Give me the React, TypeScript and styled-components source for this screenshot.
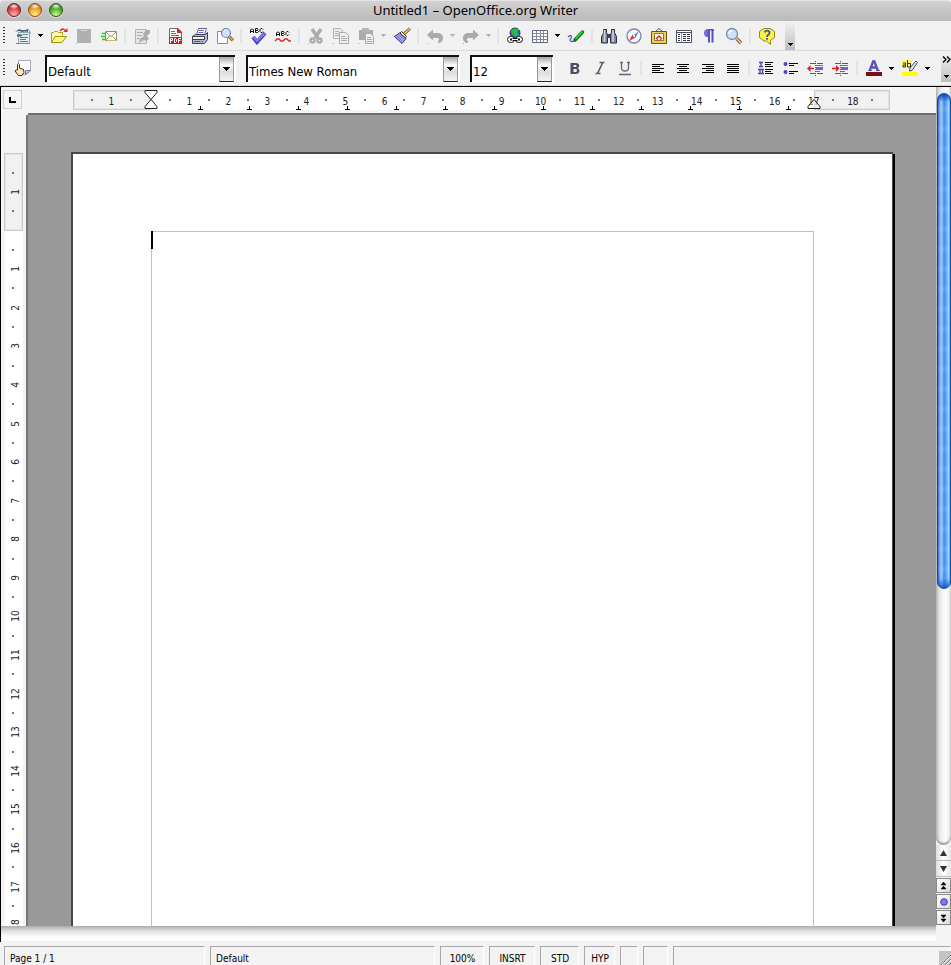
import React from "react";
import styled, { createGlobalStyle, css } from "styled-components";

const Global = createGlobalStyle`
  * { box-sizing: border-box; }
  html, body { margin: 0; height: 100%; }
  body { overflow: hidden; background: #f1f1f1; }
  button, select, textarea { font: inherit; color: inherit; margin: 0; padding: 0; border: 0; border-radius: 0; background: none; }
  svg { display: block; }
`;

const Window = styled.div`
  height: 100vh;
  display: flex;
  flex-direction: column;
  background: #f1f1f1;
  color: #000;
  font-family: "DejaVu Sans Condensed", "DejaVu Sans", sans-serif;
  font-size: 13px;
`;

/* ---------- title bar ---------- */

const TitleBar = styled.header`
  flex: 0 0 21px;
  display: grid;
  grid-template-columns: 1fr auto 1fr;
  align-items: center;
  padding: 0 7px;
  background: linear-gradient(#d2d2d2, #b9b9b9);
  border-top: 1px solid #e4e4e4;
  border-radius: 4px 4px 0 0;
`;

const Lights = styled.div`
  display: flex;
  gap: 7px;
  margin-top: -2px;
`;

const Light = styled.button<{ $dark: string; $mid: string; $glow: string }>`
  width: 14px;
  height: 14px;
  border-radius: 50%;
  border: 1px solid ${(p) => p.$dark};
  background:
    radial-gradient(ellipse 5px 3px at 50% 18%, #fffffff0, #ffffff00),
    radial-gradient(circle at 50% 90%, ${(p) => p.$glow} 0, ${(p) => p.$mid} 55%, ${(p) => p.$dark} 100%);
  box-shadow: 0 1px 0 #ffffff80;
`;

const Title = styled.h1`
  margin: 0;
  font: 400 13px/16px "Noto Sans", "Open Sans", sans-serif;
  padding-bottom: 3px;
  white-space: nowrap;
`;

/* ---------- toolbars ---------- */

const Bar = styled.div<{ $tall?: boolean }>`
  flex: 0 0 ${(p) => (p.$tall ? 35 : 30)}px;
  display: flex;
  align-items: center;
  background: #f1f1f1;
  border-bottom: 1px solid #d9d9d9;
  overflow: hidden;
`;

const Grip = styled.span`
  flex: 0 0 2px;
  height: 18px;
  margin: 0 5px 0 3px;
  background: repeating-linear-gradient(#333 0 1px, transparent 1px 3px);
`;

const Tool = styled.button`
  flex: 0 0 25px;
  height: 24px;
  display: flex;
  align-items: center;
  justify-content: center;
  svg { width: 18px; height: 18px; }
`;

const Drop = styled.button<{ $dim?: boolean }>`
  flex: 0 0 11px;
  height: 24px;
  display: flex;
  justify-content: center;
  align-items: center;
  color: ${(p) => (p.$dim ? "#b4b4b4" : "#000")};
`;

const Divider = styled.span`
  flex: 0 0 2px;
  height: 14px;
  margin: 0 3px;
  background: #e2e2e2;
`;

const EndCap = styled.button<{ $last?: boolean }>`
  flex: 0 0 10px;
  height: 28px;
  margin-left: ${(p) => (p.$last ? "auto" : "6px")};
  display: flex;
  flex-direction: column;
  align-items: center;
  justify-content: ${(p) => (p.$last ? "space-between" : "flex-end")};
  padding: 2px 0 4px;
  background: linear-gradient(#f1f1f1, #bdbdbd);
`;

const Pickers = styled.div`
  display: flex;
  gap: 11px;
  margin: 0 9px 0 10px;
`;

const Combo = styled.label<{ $w: number }>`
  flex: 0 1 ${(p) => p.$w}px;
  width: ${(p) => p.$w}px;
  height: 27px;
  display: flex;
  background: #fff;
  border: solid;
  border-width: 2px 0 0 2px;
  border-color: #111 #fff #fff #111;
  box-shadow: 1px 1px 0 #fff;
  position: relative;
`;

const Choice = styled.select`
  flex: 1;
  min-width: 0;
  appearance: none;
  padding: 5px 16px 0 1px;
  font-size: 13px;
  outline: none;
`;

const ComboArrow = styled.span`
  position: absolute;
  right: 1px;
  top: 0;
  width: 15px;
  height: 25px;
  display: flex;
  align-items: center;
  justify-content: center;
  background: linear-gradient(#a8a8a8, #fff 35%, #dcdcdc 60%, #f4f4f4);
  border: solid #999;
  border-width: 0 1px 1px;
  border-bottom-color: #222;
  pointer-events: none;
`;

const Tri: React.FC = () => (
  <svg width="5" height="3" viewBox="0 0 5 3" shapeRendering="crispEdges">
    <path d="M0 0h5v1H0zM1 1h3v1H1zM2 2h1v1H2z" fill="currentColor" />
  </svg>
);

const BigTri: React.FC = () => (
  <svg width="7" height="4" viewBox="0 0 7 4" shapeRendering="crispEdges">
    <path d="M0 0h7v1H0zM1 1h5v1H1zM2 2h3v1H2zM3 3h1v1H3z" fill="#000" />
  </svg>
);

/* ---------- icons ---------- */

const ICONS: Record<string, React.ReactNode> = {
  New: (
    <>
      <path d="M4.500 5.500h11v11h-11z" fill="#e6eff3" stroke="#8fa6b1" />
      <path d="M1 5l4-3 3 1h6v2l-3-.500L8 5 5 4z" fill="#4b6b7b" />
      <path d="M12 2.500h2.500L16 5v2" stroke="#7f98a5" fill="none" />
      <path d="M3 7.500h6l-2 2H3z" fill="#3f6274" />
      <path d="M9 7.500h5" stroke="#6c8a99" />
      <path d="M6 10.500h8M6 12.500h6M6 14.500h8" stroke="#58798a" />
      <path d="M2 16.500h14" stroke="#6f8b98" />
    </>
  ),
  Open: (
    <>
      <path d="M1.500 15.500v-10h2l1-1h3l1 1h4v3" fill="#fffbb0" stroke="#b39a1c" />
      <path d="M1.500 15.500l3.500-6h11.500l-4.500 6z" fill="#fdf77c" stroke="#a58e14" />
      <path d="M10 4c2-3 5-2.500 6 1" stroke="#e02424" fill="none" strokeWidth="1.300" />
      <path d="M13.500 5h4V1z" fill="#e02424" />
    </>
  ),
  Save: (
    <>
      <path d="M2 2h14v14H2z" fill="#b0b0b0" />
      <path d="M6 3h6v1H6z" fill="#d8d8d8" />
      <path d="M1 16h1v1H1z" fill="#d9a27a" />
    </>
  ),
  Mail: (
    <>
      <path d="M5.500 4.500h11v9h-11z" fill="#fffef0" stroke="#8d8d78" />
      <path d="M6 5l5 4.500L16 5M6 13l3.500-4M16 13l-3.500-4" stroke="#8d8d78" fill="none" />
      <path d="M2 6.500h4M1 9.500h5M2 12.500h4" stroke="#20d020" strokeWidth="1.500" />
      <path d="M7 13.500h9" stroke="#c9c34c" />
    </>
  ),
  Edit: (
    <>
      <path d="M2.500 2.500h11v14h-11z" fill="#e6e6e6" stroke="#b2b2b2" />
      <path d="M4 5.500h6M4 8.500h5M4 11.500h3" stroke="#adadad" />
      <path d="M13 3h4v3l-3 3 2 3-3 2-2-1-5 3 1-4 4-3-1-2z" fill="#adadad" />
    </>
  ),
  PDF: (
    <>
      <path d="M3.500 1.500h8l4 4v11h-12z" fill="#fff" stroke="#6d7186" />
      <path d="M11 1h1l4 4v1h-5z" fill="#d92222" />
      <path d="M5 4.500h4M5 6.500h5M5 8.500h8" stroke="#5c5fd0" />
      <path d="M3 10h13v7H3z" fill="#e61313" />
      <path d="M4.500 16v-4.500h2v2h-2M8.500 16v-4.500h1l1 1v2l-1 1h-1M12.500 16v-4.500h2.500M12.500 13.500h2" stroke="#fff" fill="none" />
    </>
  ),
  Print: (
    <>
      <path d="M5.500 8l2-6.500h8L13.500 8z" fill="#fff" stroke="#62667a" />
      <path d="M8 3.500h5M7.500 5.500h5" stroke="#6663d9" />
      <path d="M1.500 9.500l3-2h10l2-2v7l-3 4h-12z" fill="#b9bbcb" stroke="#3c3e50" />
      <path d="M1.500 9.500h12v3h-12z" fill="#f3f3fa" stroke="#3c3e50" />
      <path d="M3 14.500h9" stroke="#565970" />
      <path d="M9 14h2v1H9z" fill="#2bdc2b" />
    </>
  ),
  Preview: (
    <>
      <path d="M1.500 4.500h10v12h-10z" fill="#fff" stroke="#85889c" />
      <circle cx="10" cy="6" r="4.500" fill="#cfe2ff" stroke="#7384bb" strokeWidth="1.200" />
      <path d="M8 5c0-1 1-2 2-2" stroke="#fff" fill="none" />
      <path d="M13 9.500l4 4" stroke="#5d4519" strokeWidth="3" />
      <path d="M13 9.500l4 4" stroke="#eeb957" strokeWidth="1.500" />
    </>
  ),
  Spell: (
    <>
      <path d="M1.500 6V3l1-1h1l1 1v3M1.500 4.500h3M6.500 1.500v4h2l1-1-1-1h-2M6.500 1.500h2l.500 1-.500 1M14 2.500l-1-1h-1l-1 1v2l1 1h1l1-1" stroke="#111" fill="none" />
      <path d="M4 10l4 5 8-9" stroke="#4340a8" strokeWidth="4" fill="none" />
      <path d="M4.500 10L8 14l7.500-7.500" stroke="#827cf5" strokeWidth="2" fill="none" />
    </>
  ),
  AutoSpell: (
    <>
      <path d="M2.500 9V6l1-1h1l1 1v3M2.500 7.500h3M7.500 4.500v4h2l1-1-1-1h-2M7.500 4.500h2l.500 1-.500 1M15 5.500l-1-1h-1l-1 1v2l1 1h1l1-1" stroke="#111" fill="none" />
      <path d="M1 14l2-2h2l2 2h2l2-2h2l2 2h2" stroke="#e62222" fill="none" strokeWidth="1.300" />
    </>
  ),
  Cut: (
    <>
      <path d="M5 2l6 9M14 2L8 11" stroke="#ababab" strokeWidth="3.500" />
      <circle cx="5.500" cy="13.500" r="2" fill="none" stroke="#ababab" strokeWidth="2.300" />
      <circle cx="12.500" cy="13.500" r="2" fill="none" stroke="#ababab" strokeWidth="2.300" />
      <path d="M1 16h1v1H1z" fill="#e0a070" />
    </>
  ),
  Copy: (
    <>
      <path d="M1.500 1.500h7l2 2v8h-9z" fill="#ececec" stroke="#b3b3b3" />
      <path d="M3 4.500h4M3 6.500h5M3 8.500h5" stroke="#b3b3b3" />
      <path d="M7.500 5.500h6l3 3v8h-9z" fill="#f0f0f0" stroke="#a9a9a9" />
      <path d="M9 9.500h4M9 11.500h6M9 13.500h6" stroke="#a9a9a9" />
      <path d="M1 16l1 1" stroke="#6fc56f" />
    </>
  ),
  Paste: (
    <>
      <path d="M2 3h14v10H2z" fill="#ababab" />
      <path d="M5 1h7v4H5z" fill="#b5b5b5" />
      <path d="M8.500 6.500h5l3 3v7h-8z" fill="#f0f0f0" stroke="#a9a9a9" />
      <path d="M10 10.500h4M10 12.500h5M10 14.500h5" stroke="#a9a9a9" />
      <path d="M1 16l1 1" stroke="#6fc56f" />
    </>
  ),
  Brush: (
    <>
      <path d="M11 7l6-5.500" stroke="#60502a" strokeWidth="3" />
      <path d="M11 7l6-5.500" stroke="#f4d35c" strokeWidth="1.300" />
      <path d="M6.500 6l6.500 5.500-4 5L1.500 9.500z" fill="#a7a9f6" stroke="#272963" />
      <path d="M4 9l5 5M6 8l5 4" stroke="#6265d6" />
      <path d="M8.500 4.500l5 5-1 1.500-5.500-5z" fill="#fff9c8" stroke="#3c3820" />
    </>
  ),
  Undo: (
    <>
      <path d="M1 8l6-5.500V6h4c4 0 6 2 6 5s-2 5-5 5v-2c2-1 1-3-1-3H7v2.500z" fill="#ababab" />
      <path d="M1 16h1v1H1z" fill="#e0a070" />
    </>
  ),
  Redo: (
    <>
      <path d="M17 8l-6-5.500V6H7c-4 0-6 2-6 5s2 5 5 5v-2c-2-1-1-3 1-3h4v2.500z" fill="#ababab" />
      <path d="M1 16h1v1H1z" fill="#e0a070" />
    </>
  ),
  Link: (
    <>
      <circle cx="9" cy="6" r="5" fill="#3d53e0" stroke="#27337e" />
      <path d="M5 4c2-3 6-3 8-1l-2 2 2 3-3 2-4-3z" fill="#23bf34" />
      <rect x="1.500" y="9.500" width="7" height="6" rx="3" fill="#fff" stroke="#111" />
      <rect x="9.500" y="9.500" width="7" height="6" rx="3" fill="#fff" stroke="#111" />
      <path d="M4 12.500h3M11 12.500h3" stroke="#111" strokeWidth="2" />
      <path d="M7 12.500h4" stroke="#111" strokeWidth="3" />
      <path d="M6 12.500h6" stroke="#fff" />
    </>
  ),
  Table: (
    <>
      <path d="M1.500 3.500h15v12h-15z" fill="#fff" stroke="#64677b" />
      <path d="M2 6.500h14M2 9.500h14M2 12.500h14M5.500 4v11M9.500 4v11M12.500 4v11" stroke="#85889d" />
    </>
  ),
  Draw: (
    <>
      <path d="M1 10c3-3 5-1 2 3 0 2 3 2 6 0" stroke="#6652c6" fill="none" strokeWidth="1.300" />
      <path d="M8 13L15.500 5" stroke="#136d18" strokeWidth="3.500" strokeLinecap="round" />
      <path d="M8.500 12l7-7.500" stroke="#35e03e" strokeWidth="1.500" />
    </>
  ),
  Find: (
    <>
      <path d="M3.500 2.500h3v3l1 2v8.500h-6v-6l2-4zM11.500 2.500h3v3l2 4V16h-6V7.500l1-2z" fill="#82869c" stroke="#2b2e41" />
      <path d="M7 7h4v4H7z" fill="#3c3f55" />
      <path d="M4.500 3v12M13 3v12" stroke="#d6d9e8" strokeWidth="1.500" />
    </>
  ),
  Navigator: (
    <>
      <circle cx="9" cy="9" r="7" fill="#f7faff" stroke="#7885a8" strokeWidth="1.300" />
      <path d="M14 4l-3.500 6.500-2-2z" fill="#4e73e0" />
      <path d="M4 14l3.500-6.500 3 3z" fill="#e43131" />
      <circle cx="9" cy="9" r="1" fill="#fff" />
    </>
  ),
  Gallery: (
    <>
      <path d="M5 5l4-3.500L13 5" stroke="#555" fill="none" />
      <path d="M1.500 4.500h15v12h-15z" fill="#efcf58" stroke="#6b540f" />
      <path d="M4.500 6.500h9v7h-9z" fill="#fff" stroke="#92772a" />
      <path d="M6 12l3-3 3 3" stroke="#e02222" strokeWidth="1.500" fill="none" />
      <path d="M7 12h1v1H7zM10 12h1v1h-1z" fill="#e02222" />
    </>
  ),
  Sources: (
    <>
      <path d="M1.500 3.500h15v12h-15z" fill="#fff" stroke="#4d5063" />
      <path d="M2 5.500h14" stroke="#4d5063" />
      <path d="M6.500 6v9" stroke="#9093a5" />
      <path d="M3 7.500h2M3 9.500h2M3 11.500h2M3 13.500h2M8 7.500h3M8 9.500h3M8 11.500h3M8 13.500h3M12 7.500h3M12 9.500h3M12 11.500h3M12 13.500h3" stroke="#33364a" />
    </>
  ),
  Pilcrow: (
    <>
      <path d="M8 2h6v1.500H8z" fill="#5950bd" />
      <path d="M9 2v8H7.500C5 10 4 8 4 6s1-4 4-4z" fill="#7268dc" />
      <path d="M9 2v13.500M12.500 2v13.500" stroke="#5950bd" strokeWidth="2" />
    </>
  ),
  Zoom: (
    <>
      <circle cx="7" cy="7" r="5.500" fill="#cbe0fb" stroke="#7886ad" strokeWidth="1.300" />
      <path d="M4 7c0-2 1-3 3-3" stroke="#fff" fill="none" strokeWidth="1.300" />
      <path d="M11.500 11.500l4.500 4.500" stroke="#6c532b" strokeWidth="3.300" />
      <path d="M11.500 11.500l4.500 4.500" stroke="#eccb8c" strokeWidth="1.700" />
    </>
  ),
  Help: (
    <>
      <path d="M6 1.500h6l4.500 3v6l-4 3v4l-4-3.500H6l-4.500-3.500v-6z" fill="#fff53e" stroke="#96871c" />
      <path d="M6.500 5.500C7 3 11.500 3 11.500 6c0 2-2.500 1.500-2.500 4M9 11v1.700" stroke="#4451af" strokeWidth="1.800" fill="none" />
    </>
  ),
  Styles: (
    <>
      <path d="M4.500 1.500h12v10l-4 4h-8z" fill="#fcfcff" stroke="#a6a9b8" />
      <path d="M11.500 15.500v-4h5z" fill="#c9ccd9" stroke="#777b91" />
      <path d="M3.500 11V5.500l1-1 1 1V9l4 1.500.500 3-2 3H4.500l-3.500-4.500 1-1z" fill="#ffe7b5" stroke="#39301d" />
    </>
  ),
  Bold: (
    <path d="M4.500 4H10c4 0 4 4 1.500 5.200C14.500 10 14 15 10 15H4.500zM7.500 6v2h2c1.500 0 1.500-2 0-2zM7.500 10v3h2.200c1.800 0 1.800-3 0-3z" fill="#4a4d61" fillRule="evenodd" />
  ),
  Italic: <path d="M8.500 3.500h5M4.500 14.500h5M11.500 4L6.800 14" stroke="#5b5e70" strokeWidth="1.700" fill="none" />,
  Underline: (
    <path d="M4 3.500h3M11 3.500h3M5.500 3v6c0 4 7 4 7 0V3M3 15.500h12" stroke="#626578" strokeWidth="1.300" fill="none" />
  ),
  Left: <path d="M3 5.500h12M3 7.500h8M3 9.500h12M3 11.500h8M3 13.500h12" stroke="#000" />,
  Center: <path d="M3 5.500h12M5 7.500h8M3 9.500h12M5 11.500h8M3 13.500h12" stroke="#000" />,
  Right: <path d="M3 5.500h12M7 7.500h8M3 9.500h12M7 11.500h8M3 13.500h12" stroke="#000" />,
  Justify: <path d="M3 5.500h12M3 7.500h12M3 9.500h12M3 11.500h12M3 13.500h12" stroke="#000" />,
  Numbering: (
    <>
      <path d="M2 3.500h4M4 3v5M2 7.500h4M1 10.500h6M3 10v5M5.500 10v5M1 14.500h6" stroke="#4e45a6" strokeWidth="1.300" />
      <path d="M8 3.500h8M8 5.500h6M8 7.500h8M8 10.500h8M8 12.500h6M8 14.500h8" stroke="#000" />
    </>
  ),
  Bullets: (
    <>
      <circle cx="3.500" cy="5" r="2" fill="#4b43c2" />
      <circle cx="3.500" cy="13" r="2" fill="#4b43c2" />
      <path d="M7 4.500h9M7 6.500h5M7 12.500h9M7 14.500h5" stroke="#000" />
    </>
  ),
  Outdent: (
    <>
      <path d="M3 4.500h5M10 4.500h6M3 14.500h5M10 14.500h6" stroke="#555869" />
      <path d="M8.500 2v15" stroke="#555" strokeDasharray="1 1" />
      <path d="M9 6h7v1H9zM9 8h7v3H9zM9 12h4v1H9z" fill="#6c63dc" />
      <path d="M2 9.500h5" stroke="#e02222" strokeWidth="1.500" />
      <path d="M0 9.500L3.500 6v7z" fill="#e02222" />
    </>
  ),
  Indent: (
    <>
      <path d="M3 4.500h5M10 4.500h6M3 14.500h5M10 14.500h6" stroke="#555869" />
      <path d="M8.500 2v15" stroke="#555" strokeDasharray="1 1" />
      <path d="M9 6h7v1H9zM9 8h7v3H9zM9 12h4v1H9z" fill="#6c63dc" />
      <path d="M0 9.500h5" stroke="#e02222" strokeWidth="1.500" />
      <path d="M7.500 9.500L4 6v7z" fill="#e02222" />
    </>
  ),
  Color: (
    <>
      <path d="M4.500 12L8.500 1.500M9 1.500L13 12M6 8.500h6" stroke="#5a52b8" strokeWidth="2.300" fill="none" />
      <path d="M3 11.500h4M11 11.500h4" stroke="#5a52b8" />
      <path d="M1 13h16v4H1z" fill="#7f0d0d" />
    </>
  ),
  Highlight: (
    <>
      <path d="M1 1h10v8H1z" fill="#fff76a" />
      <path d="M2 4h2.500v4H2V6h2.500M6.500 1v7h3V4.500h-3" stroke="#333" fill="none" />
      <path d="M15 2l1.500 1.500-5.500 8-2.500.500.500-3z" fill="#e4e5f0" stroke="#444860" />
      <path d="M1 13h16v4H1z" fill="#ffff00" />
    </>
  ),
};

const Icon: React.FC<{ name: string }> = ({ name }) => (
  <Tool type="button" aria-label={name} title={name}>
    <svg viewBox="0 0 18 18" fill="none">{ICONS[name]}</svg>
  </Tool>
);

/* "|" is a divider, "v" a drop arrow, "-" a disabled drop arrow */
const STANDARD: string[] = [
  "New", "v", "Open", "Save", "Mail", "|", "Edit", "|", "PDF", "Print", "Preview", "|",
  "Spell", "AutoSpell", "|", "Cut", "Copy", "Paste", "-", "Brush", "|", "Undo", "-", "Redo", "-", "|",
  "Link", "Table", "v", "Draw", "|", "Find", "Navigator", "Gallery", "Sources", "Pilcrow", "Zoom", "|", "Help",
];

const FORMAT: string[] = [
  "Bold", "Italic", "Underline", "|", "Left", "Center", "Right", "Justify", "|",
  "Numbering", "Bullets", "Outdent", "Indent", "|", "Color", "v", "Highlight", "v",
];

const Tools: React.FC<{ items: string[] }> = ({ items }) => (
  <>
    {items.map((item, i) => {
      if (item === "|") return <Divider key={i} />;
      if (item === "v" || item === "-")
        return (
          <Drop key={i} type="button" $dim={item === "-"} aria-label={`${items[i - 1]} options`}>
            <Tri />
          </Drop>
        );
      return <Icon key={i} name={item} />;
    })}
  </>
);

const Picker: React.FC<{ label: string; value: string; width: number }> = ({ label, value, width }) => (
  <Combo $w={width}>
    <Choice aria-label={label} defaultValue={value}>
      <option>{value}</option>
    </Choice>
    <ComboArrow>
      <BigTri />
    </ComboArrow>
  </Combo>
);

/* ---------- editor ---------- */

const Editor = styled.main`
  flex: 1;
  min-height: 0;
  display: grid;
  grid-template-columns: 27px minmax(0, 1fr) 15px;
  grid-template-rows: 28px minmax(0, 1fr) 16px;
  border-top: 1px solid #000;
  border-left: 1px solid #000;
  background: #f4f4f4;
`;

const Corner = styled.div`
  padding: 3px 2px;
`;

const TabType = styled.button`
  width: 19px;
  height: 19px;
  display: flex;
  align-items: center;
  justify-content: center;
  border: 1px solid #cfcfcf;
`;

const RulerRow = styled.div`
  display: flex;
  justify-content: center;
  align-items: flex-start;
  padding-top: 3px;
  border-bottom: 2px solid #6e6e6e;
  overflow: hidden;
`;

const RulerColumn = styled.div`
  grid-row: 2 / 3;
  padding: 38px 0 0 3px;
  border-right: 2px solid #777;
  overflow: hidden;
`;

const Ruler = styled.div<{ $vertical?: boolean }>`
  display: grid;
  flex: none;
  ${(p) =>
    p.$vertical
      ? css`width: 19px; height: 790px;`
      : css`width: 820px; height: 19px;`}
  & > * { grid-area: 1 / 1; }
`;

const Track = styled.div<{ $vertical?: boolean }>`
  display: flex;
  flex-direction: ${(p) => (p.$vertical ? "column" : "row")};
  padding: ${(p) => (p.$vertical ? "0" : "0 2px 0 1px")};
`;

const MarginZone = styled.div<{ $size: number }>`
  flex: 0 0 ${(p) => p.$size}px;
  background: #f1f1f1;
  border: 1px solid #cbcbcb;
  outline: 1px solid #e4e4e4;
  outline-offset: -2px;
`;

const TextZone = styled.div<{ $vertical?: boolean }>`
  flex: 1;
  background: #fff;
  margin: ${(p) => (p.$vertical ? "0 0 0 1px" : "1px 0 0")};
`;

const Scale = styled.div<{ $vertical?: boolean }>`
  display: flex;
  flex-direction: ${(p) => (p.$vertical ? "column" : "row")};
  padding: ${(p) => (p.$vertical ? "10px 0 8px" : "0 10px")};
  z-index: 1;
`;

const Slot = styled.span<{ $vertical?: boolean }>`
  flex: 1 1 0;
  min-width: 0;
  min-height: 0;
  display: flex;
  align-items: center;
  justify-content: center;
  font-size: 10px;
  line-height: 12px;
  color: #222;
  ${(p) => (p.$vertical ? css`padding-left: 4px;` : css`padding-top: 3px;`)}
  b { font-weight: 400; ${(p) => p.$vertical && css`transform: rotate(-90deg);`} }
`;

const Dot = styled.i<{ $vertical?: boolean }>`
  width: 2px;
  height: 2px;
  background: #777;
  ${(p) => (p.$vertical ? css`margin-right: 6px;` : css`margin-bottom: 4px;`)}
`;

const Stops = styled.div`
  display: flex;
  align-items: flex-end;
  padding-left: 82px;
  z-index: 1;
`;

const Stop = styled.i`
  flex: 0 0 49px;
  height: 4px;
  display: flex;
  justify-content: flex-end;
`;

const Markers = styled.div`
  display: flex;
  justify-content: space-between;
  padding: 0 71px 0 72px;
  z-index: 2;
`;

const makeSlots = (count: number): string[] => {
  const out: string[] = [];
  for (let n = -1.5; n <= count; n += 0.5) {
    out.push(Number.isInteger(n) ? (n === 0 ? "" : String(Math.abs(n))) : "dot");
  }
  return out;
};

const ScaleMarks: React.FC<{ slots: string[]; vertical?: boolean }> = ({ slots, vertical }) => (
  <Scale $vertical={vertical}>
    {slots.map((s, i) => (
      <Slot key={i} $vertical={vertical}>
        {s === "dot" ? <Dot $vertical={vertical} /> : <b>{s}</b>}
      </Slot>
    ))}
  </Scale>
);

const Canvas = styled.div`
  display: flex;
  justify-content: center;
  align-items: flex-start;
  padding-top: 37px;
  background: #999;
  overflow: hidden;
  min-width: 0;
`;

const Page = styled.article`
  flex: 0 0 822px;
  min-height: 1160px;
  display: flex;
  padding: 77px 78px;
  background: #fff;
  border: solid #484848;
  border-width: 2px 1px 2px 2px;
  box-shadow: 2px 2px 0 #000;
`;

const Body = styled.div`
  flex: 1;
  display: flex;
  position: relative;
  border: 1px solid #c0c0c0;
`;

const Text = styled.textarea`
  flex: 1;
  resize: none;
  outline: none;
  font: 16px/18px "Liberation Serif", serif;
`;

const Caret = styled.span`
  position: absolute;
  left: -1px;
  top: -1px;
  width: 2px;
  height: 18px;
  background: #000;
`;

const Scrollbar = styled.div`
  grid-column: 3;
  grid-row: 1 / 3;
  display: flex;
  flex-direction: column;
  padding-bottom: 1px;
  background: #f1f1f1;
`;

const ScrollTrack = styled.div`
  flex: 1;
  padding: 6px 0 0;
  border-radius: 0 0 8px 8px;
  background: linear-gradient(90deg, #bdbdbd, #ececec 30%, #fff 65%, #e4e4e4);
  box-shadow: inset 0 -2px 2px #999;
`;

const Thumb = styled.div`
  height: 66%;
  margin: 0 0 0 1px;
  border-radius: 7px;
  border: 1px solid #1447b4;
  background:
    linear-gradient(#0b46bd 0, #0b46bd00 8px calc(100% - 10px), #0b46bdcc),
    repeating-linear-gradient(#ffffff00 0 10px, #ffffff1a 15px, #ffffff00 20px),
    linear-gradient(90deg, #2a62ce 0, #8dbdf4 20%, #8fc0f6 35%, #4389e6 50%, #69b4f9 75%, #a6e2ff 92%, #3c78d0);
`;

const Arrow = styled.button`
  flex: 0 0 16px;
  display: flex;
  align-items: center;
  justify-content: center;
  border-bottom: 1px solid #bbb;
  background: linear-gradient(90deg, #dcdcdc, #fff 50%, #e6e6e6);
`;

const NavButton = styled.button`
  flex: 0 0 15px;
  margin-top: 1px;
  display: flex;
  align-items: center;
  justify-content: center;
  border: 1px solid #888;
  background: linear-gradient(135deg, #fff, #dcdcdc);
`;

const BottomScroll = styled.div`
  grid-column: 1 / 3;
  grid-row: 3;
  background: linear-gradient(#acacac, #dedede 30%, #fbfbfb 65%, #fff 85%, #ededed);
`;

/* ---------- status bar ---------- */

const StatusBar = styled.footer`
  flex: 0 0 23px;
  display: flex;
  gap: 5px;
  padding: 4px 0 0 4px;
  background: #f3f3f3;
  overflow: hidden;
  position: relative;
`;

const Cell = styled.span<{ $w?: number; $left?: boolean }>`
  flex: ${(p) => (p.$w ? `0 0 ${p.$w}px` : "1")};
  padding: 5px 4px 0 5px;
  border: solid #a8a8a8;
  border-width: 1px 0 0 1px;
  border-right: 1px solid #fff;
  font-size: 10px;
  line-height: 14px;
  text-align: ${(p) => (p.$left ? "left" : "center")};
  white-space: nowrap;
`;

const Resize = styled.span`
  position: absolute;
  right: 0;
  bottom: 0;
  width: 12px;
  height: 14px;
  background: #c4c4c4;
`;

const STATUS: { text: string; w?: number; left?: boolean }[] = [
  { text: "Page 1 / 1", w: 201, left: true },
  { text: "Default", w: 225, left: true },
  { text: "100%", w: 44 },
  { text: "INSRT", w: 46 },
  { text: "STD", w: 39 },
  { text: "HYP", w: 31 },
  { text: "", w: 18 },
  { text: "", w: 25 },
  { text: "" },
];

export default function App() {
  return (
    <Window>
      <Global />
      <TitleBar>
        <Lights>
          <Light aria-label="Close" $dark="#6d1c1c" $mid="#d64545" $glow="#ffb3ab" />
          <Light aria-label="Minimize" $dark="#8a4a12" $mid="#ee9a26" $glow="#fff28c" />
          <Light aria-label="Zoom window" $dark="#285c14" $mid="#52a82c" $glow="#ccff88" />
        </Lights>
        <Title>Untitled1 – OpenOffice.org Writer</Title>
      </TitleBar>

      <Bar role="toolbar" aria-label="Standard">
        <Grip />
        <Tools items={STANDARD} />
        <EndCap type="button" aria-label="Standard toolbar options">
          <Tri />
        </EndCap>
      </Bar>

      <Bar $tall role="toolbar" aria-label="Formatting">
        <Grip />
        <Icon name="Styles" />
        <Pickers>
          <Picker label="Paragraph style" value="Default" width={190} />
          <Picker label="Font name" value="Times New Roman" width={213} />
          <Picker label="Font size" value="12" width={83} />
        </Pickers>
        <Tools items={FORMAT} />
        <EndCap $last type="button" aria-label="More formatting tools">
          <svg width="9" height="7" viewBox="0 0 9 7">
            <path d="M1 .5l3 3-3 3M5 .5l3 3-3 3" stroke="#000" fill="none" strokeWidth="1.300" />
          </svg>
          <Tri />
        </EndCap>
      </Bar>

      <Editor>
        <Corner>
          <TabType type="button" aria-label="Tab type">
            <svg width="7" height="6" viewBox="0 0 7 6">
              <path d="M0 0h2v4h5v2H0z" fill="#000" />
            </svg>
          </TabType>
        </Corner>
        <RulerRow>
          <Ruler>
            <Track>
              <MarginZone $size={78} />
              <TextZone />
              <MarginZone $size={76} />
            </Track>
            <ScaleMarks slots={makeSlots(18.5)} />
            <Stops>
              {Array.from({ length: 13 }, (_, i) => (
                <Stop key={i}>
                  <svg width="5" height="4" viewBox="0 0 5 4" shapeRendering="crispEdges">
                    <path d="M2 0h1v3h2v1H0V3h2z" fill="#000" />
                  </svg>
                </Stop>
              ))}
            </Stops>
            <Markers>
              <svg width="14" height="20" viewBox="0 0 14 20">
                <path d="M1 .5h12v2L7 9.500 1 2.500zM1 18.500h12v-2L7 9.500 1 16.500z" fill="#fff" stroke="#222" />
              </svg>
              <svg width="14" height="20" viewBox="0 0 14 20">
                <path d="M1 18.500h12v-2L7 9.500 1 16.500z" fill="#f1f1f1" fillOpacity="0.6" stroke="#222" />
              </svg>
            </Markers>
          </Ruler>
        </RulerRow>
        <RulerColumn>
          <Ruler $vertical>
            <Track $vertical>
              <MarginZone $size={78} />
              <TextZone $vertical />
            </Track>
            <ScaleMarks vertical slots={makeSlots(18)} />
          </Ruler>
        </RulerColumn>
        <Canvas>
          <Page>
            <Body>
              <Text aria-label="Document text" />
              <Caret />
            </Body>
          </Page>
        </Canvas>
        <Scrollbar>
          <ScrollTrack>
            <Thumb />
          </ScrollTrack>
          <Arrow type="button" aria-label="Scroll up">
            <svg width="7" height="6" viewBox="0 0 7 6"><path d="M3.500 0L7 6H0z" fill="#333" /></svg>
          </Arrow>
          <Arrow type="button" aria-label="Scroll down">
            <svg width="7" height="6" viewBox="0 0 7 6"><path d="M3.500 6L7 0H0z" fill="#333" /></svg>
          </Arrow>
          <NavButton type="button" aria-label="Previous page">
            <svg width="7" height="8" viewBox="0 0 7 8"><path d="M3.500 0L6 3H1zM3.500 4L6 7H1z" fill="#000" stroke="#000" strokeWidth=".5" /></svg>
          </NavButton>
          <NavButton type="button" aria-label="Navigation">
            <svg width="8" height="8" viewBox="0 0 8 8"><circle cx="4" cy="4" r="3.300" fill="#7d7cf2" stroke="#3c3aa8" /></svg>
          </NavButton>
          <NavButton type="button" aria-label="Next page">
            <svg width="7" height="8" viewBox="0 0 7 8"><path d="M3.500 4L6 1H1zM3.500 8L6 5H1z" fill="#000" stroke="#000" strokeWidth=".5" /></svg>
          </NavButton>
        </Scrollbar>
        <BottomScroll />
      </Editor>

      <StatusBar>
        {STATUS.map((s, i) => (
          <Cell key={i} $w={s.w} $left={s.left}>
            {s.text}
          </Cell>
        ))}
        <Resize>
          <svg width="12" height="14" viewBox="0 0 12 14">
            <path d="M2 14L12 4M6 14l6-6M10 14l2-2" stroke="#777" />
            <path d="M3 14l9-9M7 14l5-5" stroke="#fff" />
          </svg>
        </Resize>
      </StatusBar>
    </Window>
  );
}
